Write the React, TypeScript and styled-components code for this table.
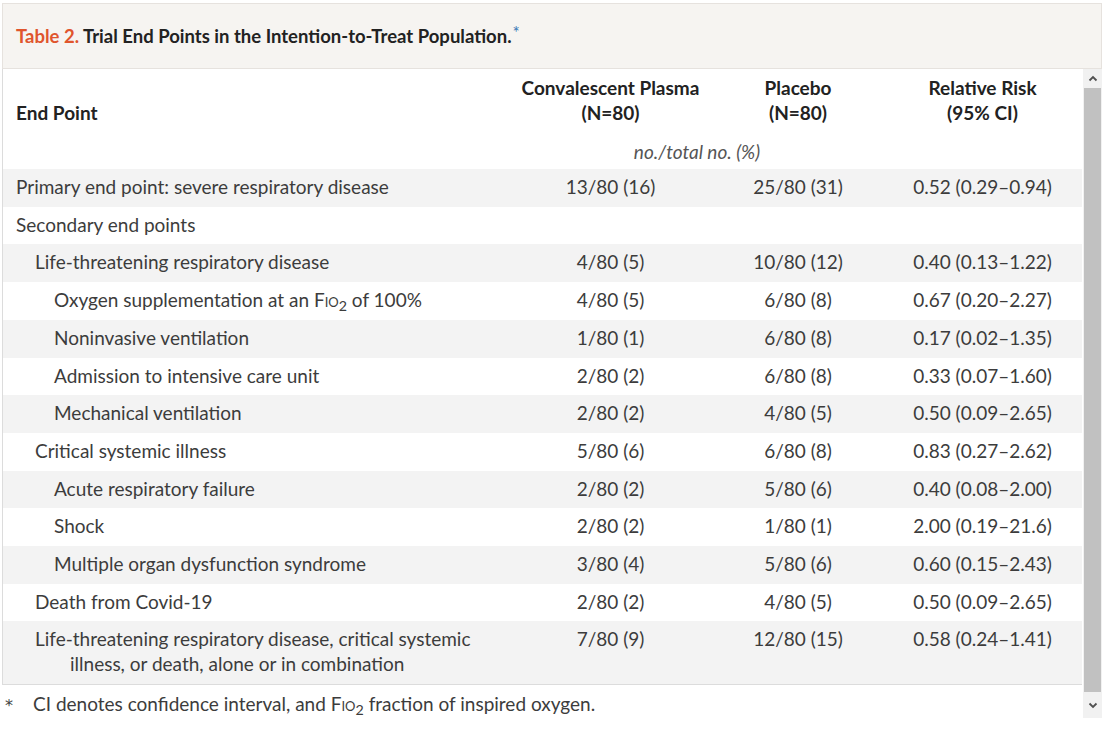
import React from "react";
import styled, { createGlobalStyle } from "styled-components";

const Global = createGlobalStyle`
  html, body { margin: 0; padding: 0; background: #ffffff; }
  body { font-family: Lato, "Noto Sans", sans-serif; color: #3c3c3c; }
`;

const Frame = styled.div`
  width: 1100px;
  padding: 3px 0 0 2px;
`;

const Header = styled.div`
  display: flex;
  align-items: center;
  padding-left: 13px;
  background: #f6f4f1;
  border: 1px solid #e6e2de;
  box-sizing: border-box;
  height: 66px;
`;

const Title = styled.h2`
  margin: 0;
  font-size: 18.5px;
  font-weight: 700;
  color: #222;
`;

const TableNo = styled.span`
  color: #e0552d;
`;

const Star = styled.sup`
  color: #3b78b5;
  font-size: 17px;
  font-weight: 400;
  vertical-align: 4px;
  line-height: 0;
  margin-left: 1px;
`;

const Body = styled.div`
  display: flex;
  height: 649px;
`;

const Pane = styled.div`
  flex: 1;
  overflow: hidden;
`;

const Table = styled.table`
  width: 1079px;
  table-layout: fixed;
  border-collapse: collapse;
  border-left: 1px solid #dcdcdc;
  border-bottom: 1px solid #dcdcdc;
  font-size: 19px;
`;

const HeadCell = styled.th<{ $align?: string }>`
  text-align: ${(p) => p.$align || "center"};
  vertical-align: ${(p) => (p.$align === "left" ? "bottom" : "top")};
  font-weight: 700;
  color: #222;
  line-height: 25px;
  padding: 6px 0 10px ${(p) => (p.$align === "left" ? "13px" : "0")};
`;

const UnitsCell = styled.td`
  text-align: center;
  font-style: italic;
  color: #555;
  height: 32px;
  padding: 0 22px 2px 0;
`;

const Row = styled.tr<{ $shade: boolean }>`
  background: ${(p) => (p.$shade ? "#f3f3f3" : "#ffffff")};
`;

const LabelCell = styled.td<{ $level: number }>`
  padding: 6px 0 7px ${(p) => 13 + p.$level * 19 + 35}px;
  text-indent: -35px;
  line-height: 24.7px;
  vertical-align: top;
`;

const ValueCell = styled.td<{ $pr?: number }>`
  text-align: center;
  padding: 6px ${(p) => p.$pr || 0}px 7px 0;
  line-height: 24.7px;
  vertical-align: top;
  white-space: nowrap;
`;

const SmallCaps = styled.span`
  font-variant: small-caps;
`;

const Sub = styled.sub`
  font-size: 0.75em;
  vertical-align: -4px;
  line-height: 0;
`;

const Footnote = styled.p`
  display: flex;
  align-items: baseline;
  margin: 7px 0 0 0;
  font-size: 19px;
  line-height: 24px;
  color: #3c3c3c;
`;

const FootMark = styled.span`
  width: 31px;
  padding-left: 3px;
  box-sizing: border-box;
  font-family: "DejaVu Sans", sans-serif;
  font-size: 16px;
  color: #444;
`;

const Scrollbar = styled.div`
  width: 19px;
  display: flex;
  flex-direction: column;
  background: #f1f1f1;
  margin-left: 1px;
`;

const ScrollButton = styled.div<{ $h: number }>`
  height: ${(p) => p.$h}px;
  display: flex;
  align-items: center;
  justify-content: center;
  background: #f1f1f1;
`;

const Thumb = styled.div`
  flex: 1;
  background: #c1c1c1;
  margin: 0 1px;
`;

const Fio2 = () => (
  <>
    F<SmallCaps>io</SmallCaps>
    <Sub>2</Sub>
  </>
);

type R = {
  label: React.ReactNode;
  level: number;
  a?: string;
  b?: string;
  c?: string;
};

const rows: R[] = [
  { label: "Primary end point: severe respiratory disease", level: 0, a: "13/80 (16)", b: "25/80 (31)", c: "0.52 (0.29–0.94)" },
  { label: "Secondary end points", level: 0 },
  { label: "Life-threatening respiratory disease", level: 1, a: "4/80 (5)", b: "10/80 (12)", c: "0.40 (0.13–1.22)" },
  { label: <>Oxygen supplementation at an <Fio2 /> of 100%</>, level: 2, a: "4/80 (5)", b: "6/80 (8)", c: "0.67 (0.20–2.27)" },
  { label: "Noninvasive ventilation", level: 2, a: "1/80 (1)", b: "6/80 (8)", c: "0.17 (0.02–1.35)" },
  { label: "Admission to intensive care unit", level: 2, a: "2/80 (2)", b: "6/80 (8)", c: "0.33 (0.07–1.60)" },
  { label: "Mechanical ventilation", level: 2, a: "2/80 (2)", b: "4/80 (5)", c: "0.50 (0.09–2.65)" },
  { label: "Critical systemic illness", level: 1, a: "5/80 (6)", b: "6/80 (8)", c: "0.83 (0.27–2.62)" },
  { label: "Acute respiratory failure", level: 2, a: "2/80 (2)", b: "5/80 (6)", c: "0.40 (0.08–2.00)" },
  { label: "Shock", level: 2, a: "2/80 (2)", b: "1/80 (1)", c: "2.00 (0.19–21.6)" },
  { label: "Multiple organ dysfunction syndrome", level: 2, a: "3/80 (4)", b: "5/80 (6)", c: "0.60 (0.15–2.43)" },
  { label: "Death from Covid-19", level: 1, a: "2/80 (2)", b: "4/80 (5)", c: "0.50 (0.09–2.65)" },
  { label: "Life-threatening respiratory disease, critical systemic illness, or death, alone or in combination", level: 1, a: "7/80 (9)", b: "12/80 (15)", c: "0.58 (0.24–1.41)" },
];

const Chevron = ({ up }: { up?: boolean }) => (
  <svg width="10" height="7" viewBox="0 0 10 7">
    <path
      d={up ? "M1.5 5.5 L5 2 L8.5 5.5" : "M1.5 1.5 L5 5 L8.5 1.5"}
      fill="none"
      stroke="#505050"
      strokeWidth="1.8"
    />
  </svg>
);

export default function App() {
  return (
    <>
      <Global />
      <Frame>
        <Header>
          <Title>
            <TableNo>Table 2.</TableNo> Trial End Points in the Intention-to-Treat Population.
            <Star>*</Star>
          </Title>
        </Header>
        <Body>
          <Pane>
            <Table>
              <colgroup>
                <col style={{ width: 518 }} />
                <col style={{ width: 180 }} />
                <col style={{ width: 195 }} />
                <col style={{ width: 186 }} />
              </colgroup>
              <thead>
                <tr>
                  <HeadCell $align="left">End Point</HeadCell>
                  <HeadCell>
                    Convalescent Plasma
                    <br />
                    (N=80)
                  </HeadCell>
                  <HeadCell>
                    Placebo
                    <br />
                    (N=80)
                  </HeadCell>
                  <HeadCell style={{ paddingRight: 12 }}>
                    Relative Risk
                    <br />
                    (95% CI)
                  </HeadCell>
                </tr>
                <tr>
                  <td />
                  <UnitsCell colSpan={2}>no./total no. (%)</UnitsCell>
                  <td />
                </tr>
              </thead>
              <tbody>
                {rows.map((r, i) => (
                  <Row key={i} $shade={i % 2 === 0}>
                    <LabelCell $level={r.level}>{r.label}</LabelCell>
                    <ValueCell>{r.a}</ValueCell>
                    <ValueCell>{r.b}</ValueCell>
                    <ValueCell $pr={12}>{r.c}</ValueCell>
                  </Row>
                ))}
              </tbody>
            </Table>
            <Footnote>
              <FootMark>*</FootMark>
              <span>
                CI denotes confidence interval, and <Fio2 /> fraction of inspired oxygen.
              </span>
            </Footnote>
          </Pane>
          <Scrollbar>
            <ScrollButton $h={19}>
              <Chevron up />
            </ScrollButton>
            <Thumb />
            <ScrollButton $h={26}>
              <Chevron />
            </ScrollButton>
          </Scrollbar>
        </Body>
      </Frame>
    </>
  );
}
